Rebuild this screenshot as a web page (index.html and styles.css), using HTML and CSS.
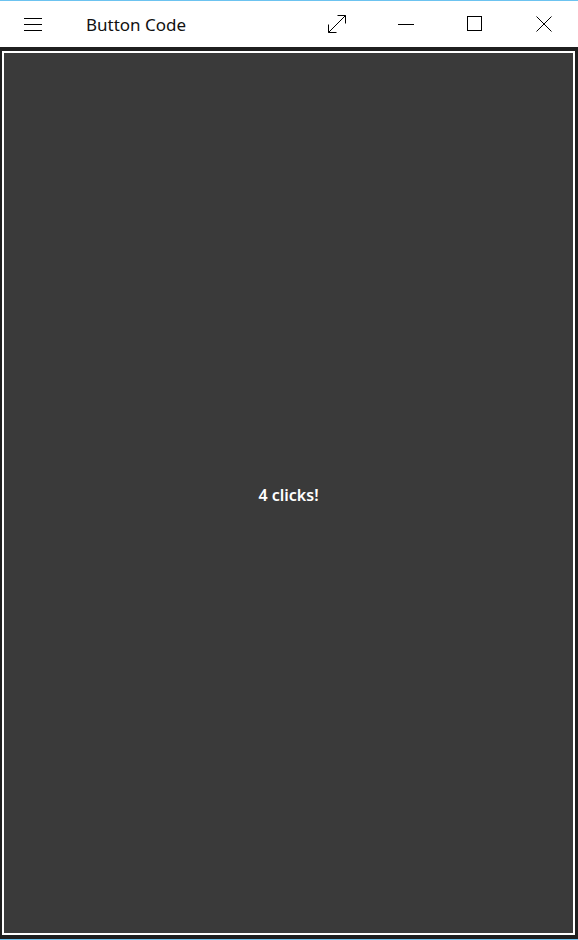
FILE: index.html
```html
<!DOCTYPE html>
<html lang="en">
<head>
<meta charset="utf-8">
<title>Button Code</title>
<link rel="stylesheet" href="styles.css">
</head>
<body>
<div class="window">
  <header class="titlebar">
    <div class="menu-btn">
      <svg width="18" height="14" viewBox="0 0 18 14" class="icon">
        <path d="M0 0.5H18M0 6.5H18M0 12.5H18" stroke="#000" stroke-width="1" fill="none"/>
      </svg>
    </div>
    <div class="title">Button Code</div>
    <div class="caption-buttons">
      <div class="cap-btn">
        <svg width="20" height="20" viewBox="0 0 20 20" class="icon">
          <path d="M1.5 18.5L18.5 1.5M10.5 1.5H18.5V9.5M1.5 10.5V18.5H9.5" stroke="#000" stroke-width="1" fill="none"/>
        </svg>
      </div>
      <div class="cap-btn">
        <svg width="16" height="16" viewBox="0 0 16 16" class="icon">
          <path d="M0 8.5H16" stroke="#000" stroke-width="1" fill="none"/>
        </svg>
      </div>
      <div class="cap-btn">
        <svg width="16" height="16" viewBox="0 0 16 16" class="icon">
          <rect x="0.5" y="0.5" width="14" height="14" stroke="#000" stroke-width="1" fill="none"/>
        </svg>
      </div>
      <div class="cap-btn">
        <svg width="16" height="16" viewBox="0 0 16 16" class="icon">
          <path d="M0.5 0.5L15.5 15.5M15.5 0.5L0.5 15.5" stroke="#000" stroke-width="1" fill="none"/>
        </svg>
      </div>
    </div>
  </header>
  <main class="content">
    <button class="big-button">4 clicks!</button>
  </main>
</div>
</body>
</html>
```

FILE: styles.css
```css
html, body {
  margin: 0;
  padding: 0;
  height: 100%;
}
body {
  background: #1f1f1f;
  font-family: "Noto Sans", "Open Sans", sans-serif;
}
.window {
  height: 940px;
  box-sizing: border-box;
  border-top: 1px solid #6cc3f0;
  border-bottom: 1px solid #6cc3f0;
  display: flex;
  flex-direction: column;
}
.titlebar {
  height: 46px;
  flex: none;
  background: #ffffff;
  display: flex;
  align-items: center;
  position: relative;
}
.icon {
  display: block;
}
.menu-btn {
  width: 18px;
  margin-left: 24px;
  margin-top: 2px;
}
.title {
  margin-left: 44px;
  font-size: 17px;
  color: #111;
  margin-top: 1px;
}
.caption-buttons {
  margin-left: auto;
  display: flex;
  height: 100%;
}
.cap-btn {
  width: 69px;
  display: flex;
  align-items: center;
  justify-content: center;
}
.cap-btn:first-child {
  width: 66px;
  padding-right: 2px;
  box-sizing: border-box;
}
.content {
  flex: 1;
  display: flex;
  padding: 4px 3px 4px 2px;
  background: #1f1f1f;
}
.big-button {
  flex: 1;
  margin: 0;
  background: #3a3a3a;
  border: 2px solid #ffffff;
  color: #ffffff;
  font-family: "Noto Sans", "Open Sans", sans-serif;
  font-weight: 600;
  font-size: 16px;
  padding: 0;
  padding-top: 3px;
}
```
